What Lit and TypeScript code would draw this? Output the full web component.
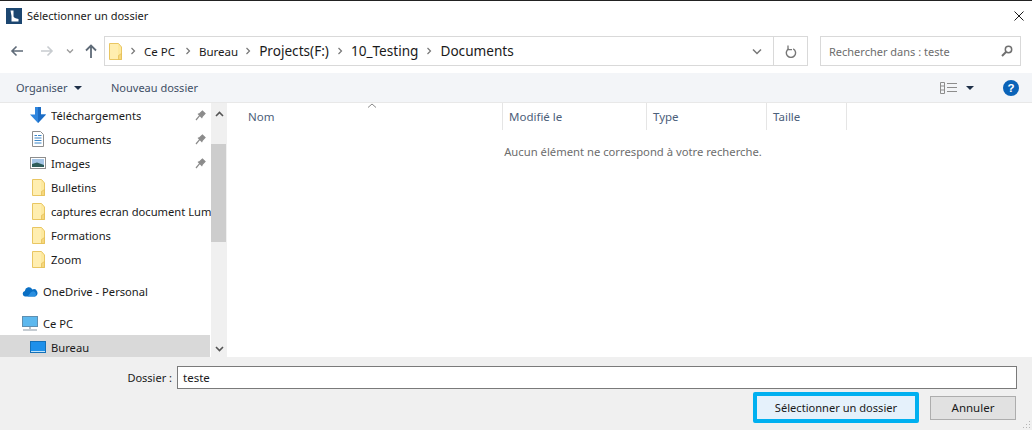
import { LitElement, html, css } from "lit";
import { customElement } from "lit/decorators.js";

const folder = html`<svg width="14" height="17" viewBox="-1 0 14 17"><path d="M.5 .5H9.5L12.5 4V16.5H.5Z" fill="#fde99f" stroke="#e9c662"/><path d="M1 1H9V16H1Z" fill="#ffeeb0"/><path d="M9.5 12.5 12.5 10.5V16.5H9.5Z" fill="#f6d77c" stroke="#e4bd55" stroke-width=".7"/></svg>`;
const pin = html`<svg width="12" height="12" viewBox="0 0 12 12" class="pin"><path d="M1 11 4.6 6.6M3 4.6 7.4 9M4.4 4.9 7.4 2 10 4.6 7.1 7.6Z" fill="#8b8b8b" stroke="#8b8b8b" stroke-width="1.2"/></svg>`;

@customElement("app-root")
export class AppRoot extends LitElement {
  static styles = css`
    :host { display: block; width: 1032px; height: 430px; overflow: hidden; background: #fff; font-family: "Noto Sans", "Open Sans", sans-serif; font-size: 11.5px; color: #1a1a1a; }
    svg { display: block; flex: none; }
    .dialog { height: 430px; display: flex; flex-direction: column; border-top: 1px solid #222; box-sizing: border-box; }
    .title { height: 29px; flex: none; display: flex; align-items: center; padding: 0 6px; gap: 5px; font-size: 11px; }
    .close { margin-left: auto; margin-right: 2px; }
    .nav { height: 43px; flex: none; display: flex; align-items: flex-start; padding: 6px 11px 0 10px; box-sizing: border-box; }
    .nav-buttons { width: 94px; height: 29px; display: flex; align-items: center; flex: none; }
    .nb-fwd { margin-left: 16px; }
    .nb-drop { margin-left: 12px; }
    .nb-up { margin-left: 11px; }
    .address { width: 704px; height: 30px; box-sizing: border-box; border: 1px solid #d9d9d9; display: flex; align-items: center; flex: none; }
    .crumbs { flex: 1; display: flex; align-items: center; padding-left: 3px; gap: 8px; }
    .crumbs .big { font-size: 13.6px; margin-bottom: 2px; }
    .chev-bureau { margin-left: 2px; }
    .chev-proj { margin-left: -1px; }
    .addr-right { width: 33px; height: 100%; border-left: 1px solid #d9d9d9; display: flex; align-items: center; justify-content: center; }
    .addr-drop { margin-right: 11px; }
    .search { margin-left: 12px; width: 201px; height: 30px; box-sizing: border-box; border: 1px solid #d9d9d9; display: flex; align-items: center; justify-content: space-between; padding: 0 7px 0 8px; color: #6d6d6d; font-size: 11px; flex: none; }
    .toolbar { height: 30px; flex: none; background: #f3f5f8; border-bottom: 1px solid #e8e8e8; box-sizing: border-box; display: flex; align-items: center; padding: 0 13px 0 16px; color: #3f4f66; font-size: 11px; }
    .org { display: flex; align-items: center; gap: 6px; width: 95px; }
    .right { margin-left: auto; display: flex; align-items: center; }
    .view-caret { margin-left: 9px; }
    .help { margin-left: 29px; }
    .main { height: 254px; flex: none; display: flex; }
    .side { width: 211px; flex: none; overflow: hidden; font-size: 11.2px; }
    .row { height: 24px; display: flex; align-items: center; white-space: nowrap; position: relative; box-sizing: border-box; flex: none; }
    .ic { width: 16px; display: flex; justify-content: center; flex: none; margin-right: 5px; }
    .l2 { padding-left: 30px; }
    .l1 { padding-left: 22px; }
    .gap { margin-top: 8px; }
    .row.sel { background: #d9d9d9; margin-right: 1px; }
    .pin { position: absolute; right: 4px; top: 6px; }
    .name { overflow: hidden; }
    .scroll { width: 16px; background: #f0f0f0; flex: none; display: flex; flex-direction: column; margin-right: 2px; }
    .arrow { height: 17px; display: flex; align-items: center; justify-content: center; flex: none; }
    .arrow.up { margin-top: 2px; }
    .thumb { width: 15px; height: 98px; background: #cdcdcd; margin-top: 22px; flex: none; }
    .arrow.down { margin-top: auto; }
    .content { flex: 1; display: flex; flex-direction: column; }
    .head { height: 27px; display: flex; color: #4c607a; flex: none; }
    .col { box-sizing: border-box; border-right: 1px solid #e5e5e5; padding: 6px 0 0 6px; flex: none; }
    .col.nom { width: 274px; padding-left: 19px; position: relative; }
    .col.mod { width: 144px; }
    .col.type { width: 120px; }
    .col.size { width: 80px; }
    .caret { position: absolute; left: 138px; top: 0; }
    .empty { text-align: center; color: #6d6d6d; font-size: 11.25px; margin-top: 14px; width: 808px; }
    .bottom { flex: 1; background: #f0f0f0; display: flex; flex-direction: column; position: relative; padding: 9px 15px 0 0; }
    .field { display: flex; align-items: center; justify-content: flex-end; gap: 5px; font-size: 11px; }
    .input { width: 840px; height: 23px; box-sizing: border-box; border: 1px solid #7a7a7a; background: #fff; padding-left: 5px; display: flex; align-items: center; font-size: 11.5px; }
    .actions { display: flex; justify-content: flex-end; align-items: center; margin-top: 3px; padding-right: 1px; }
    .btn { display: flex; align-items: center; justify-content: center; box-sizing: border-box; }
    .primary { width: 166px; height: 31px; border: 4px solid #00b0f0; border-radius: 2px; background: #e5f1fb; margin-right: 11px; font-size: 11.1px; }
    .cancel { width: 86px; height: 24px; border: 1px solid #adadad; background: #e1e1e1; }
    .grip { position: absolute; right: 1px; bottom: 1px; }
  `;

  private sideRow(name: string, icon: unknown, cls = "l2", pinned = false) {
    return html`<div class="row ${cls}"><span class="ic">${icon}</span><span class="name">${name}</span>${pinned ? pin : ""}</div>`;
  }

  render() {
    const dl = html`<svg width="16" height="16" viewBox="0 0 16 16"><path d="M5 0H11V7.5H16L8 16 0 7.5H5Z" fill="#2f86de"/><path d="M8 0H11V7.5H16L8 16Z" fill="#1c6cc4"/></svg>`;
    const doc = html`<svg width="12" height="16" viewBox="0 0 12 16"><path d="M.5 .5H8.5L11.5 3.5V15.5H.5Z" fill="#fff" stroke="#8d8d8d"/><path d="M2.5 4.5H5M6 4.5H9.5M2.5 7H9.5M2.5 9.5H9.5M2.5 12H9.5" stroke="#3d87c8"/></svg>`;
    const img = html`<svg width="16" height="12" viewBox="0 0 16 12"><rect x=".5" y=".5" width="15" height="11" fill="#fff" stroke="#8d8d8d"/><rect x="2" y="2" width="12" height="8" fill="#a5c5e6"/><path d="M2 7 7 5.5 14 8V10H2Z" fill="#2e5d5a"/></svg>`;
    const cloud = html`<svg width="16" height="11" viewBox="0 0 17 11" preserveAspectRatio="none"><path d="M3 10.5A2.8 2.8 0 0 1 3 5 4.3 4.3 0 0 1 11 3.4 3.6 3.6 0 0 1 14 10.5Z" fill="#0a6fc4"/><path d="M6 10.5 9 6.8A4 4 0 0 1 11 5.5 3 3 0 0 1 14 10.5Z" fill="#2a8fe0"/></svg>`;
    const pc = html`<svg width="16" height="15" viewBox="0 0 16 15"><rect x=".5" y=".5" width="15" height="10" fill="#5cb8ee" stroke="#5f8fb0"/><path d="M8 11V13M1 14H15" stroke="#8b9aa6" stroke-width="1.2"/></svg>`;
    const desk = html`<svg width="16" height="12" viewBox="0 0 16 12"><rect x=".5" y=".5" width="15" height="11" fill="#1e90ea" stroke="#1470b8"/><path d="M1 10.5H15" stroke="#bfe3fa"/></svg>`;
    const chev = (cls = "") => html`<svg class=${cls} width="6" height="8" viewBox="0 0 6 8"><path d="M1.5 1 4.5 4 1.5 7" fill="none" stroke="#777" stroke-width="1.2"/></svg>`;
    return html`<div class="dialog">
      <div class="title">
        <svg width="16" height="16" viewBox="0 0 16 16"><rect width="16" height="16" fill="#1c4670"/><path d="M4.5 2.5H7.5V8.5Q8 10 12.5 11V13.5H5.5Q6 8 4.5 2.5Z" fill="#fff"/></svg>
        <span>Sélectionner un dossier</span>
        <svg class="close" width="10" height="10" viewBox="0 0 10 10"><path d="M.5 .5 9.5 9.5M9.5 .5 .5 9.5" stroke="#1a1a1a" fill="none"/></svg>
      </div>
      <div class="nav">
        <div class="nav-buttons">
          <svg width="14" height="12" viewBox="0 0 14 12"><path d="M13 6H2M6.5 1.5 2 6 6.5 10.5" fill="none" stroke="#5f6b78" stroke-width="1.6"/></svg>
          <svg class="nb-fwd" width="14" height="12" viewBox="0 0 14 12"><path d="M1 6H12M7.5 1.5 12 6 7.5 10.5" fill="none" stroke="#c8ccd0" stroke-width="1.6"/></svg>
          <svg class="nb-drop" width="8" height="6" viewBox="0 0 8 6"><path d="M1 1.5 4 4.5 7 1.5" fill="none" stroke="#9a9a9a" stroke-width="1.3"/></svg>
          <svg class="nb-up" width="12" height="14" viewBox="0 0 12 14"><path d="M6 14V2M1 6.5 6 1.5 11 6.5" fill="none" stroke="#5f6b78" stroke-width="1.8"/></svg>
        </div>
        <div class="address">
          <div class="crumbs">
            ${folder}
            ${chev()}<span>Ce PC</span>${chev("chev-bureau")}<span>Bureau</span>${chev("chev-proj")}<span class="big">Projects(F:)</span>${chev()}<span class="big">10_Testing</span>${chev()}<span class="big">Documents</span>
          </div>
          <svg class="addr-drop" width="10" height="7" viewBox="0 0 10 7"><path d="M1 1.5 5 5.5 9 1.5" fill="none" stroke="#777" stroke-width="1.5"/></svg>
          <div class="addr-right"><svg width="12" height="13" viewBox="0 0 12 13"><path d="M3.5 2.8A4.6 4.6 0 1 0 8 2.8" fill="none" stroke="#777" stroke-width="1.4" transform="translate(.2 1)"/><path d="M3 .5V4.6H7" fill="none" stroke="#777" stroke-width="1.3"/></svg></div>
        </div>
        <div class="search"><span>Rechercher dans : teste</span>
          <svg width="12" height="12" viewBox="0 0 12 12"><circle cx="7.5" cy="4.5" r="3.2" fill="none" stroke="#6f6f6f" stroke-width="1.5"/><path d="M5 7 1 11" stroke="#6f6f6f" stroke-width="2"/></svg>
        </div>
      </div>
      <div class="toolbar">
        <div class="org"><span>Organiser</span><svg width="8" height="4" viewBox="0 0 8 4"><path d="M0 0H8L4 4Z" fill="#1e3048"/></svg></div>
        <span>Nouveau dossier</span>
        <div class="right">
          <svg width="17" height="12" viewBox="0 0 17 12"><path d="M.5 .5H4.5V11.5H.5ZM.5 4H4.5M.5 8H4.5M7 1.5H17M7 5.5H17M7 9.5H17" fill="none" stroke="#8d8d8d"/></svg>
          <svg class="view-caret" width="8" height="4" viewBox="0 0 8 4"><path d="M0 0H8L4 4Z" fill="#1e3048"/></svg>
          <svg class="help" width="16" height="16" viewBox="0 0 16 16"><circle cx="8" cy="8" r="8" fill="#0a63b8"/><text x="8" y="12" text-anchor="middle" font-family="Liberation Sans" font-weight="700" font-size="11.5" fill="#fff">?</text></svg>
        </div>
      </div>
      <div class="main">
        <div class="side">
          ${this.sideRow("Téléchargements", dl, "l2", true)}
          ${this.sideRow("Documents", doc, "l2", true)}
          ${this.sideRow("Images", img, "l2", true)}
          ${this.sideRow("Bulletins", folder)}
          ${this.sideRow("captures ecran document Lum", folder)}
          ${this.sideRow("Formations", folder)}
          ${this.sideRow("Zoom", folder)}
          ${this.sideRow("OneDrive - Personal", cloud, "l1 gap")}
          ${this.sideRow("Ce PC", pc, "l1 gap")}
          ${this.sideRow("Bureau", desk, "l2 sel")}
        </div>
        <div class="scroll">
          <div class="arrow up"><svg width="9" height="6" viewBox="0 0 9 6"><path d="M1 5 4.5 1.5 8 5" fill="none" stroke="#555" stroke-width="1.6"/></svg></div>
          <div class="thumb"></div>
          <div class="arrow down"><svg width="9" height="6" viewBox="0 0 9 6"><path d="M1 1 4.5 4.5 8 1" fill="none" stroke="#555" stroke-width="1.6"/></svg></div>
        </div>
        <div class="content">
          <div class="head">
            <div class="col nom">Nom<svg class="caret" width="10" height="5" viewBox="0 0 10 5"><path d="M1 4.5 5 1 9 4.5" fill="none" stroke="#8a8a8a"/></svg></div>
            <div class="col mod">Modifié le</div>
            <div class="col type">Type</div>
            <div class="col size">Taille</div>
          </div>
          <div class="empty">Aucun élément ne correspond à votre recherche.</div>
        </div>
      </div>
      <div class="bottom">
        <div class="field"><span>Dossier :</span><div class="input">teste</div></div>
        <div class="actions">
          <div class="btn primary">Sélectionner un dossier</div>
          <div class="btn cancel">Annuler</div>
        </div>
        <svg class="grip" width="9" height="9" viewBox="0 0 9 9"><path d="M7 1h1v1H7zM4 4h1v1H4zM7 4h1v1H7zM1 7h1v1H1zM4 7h1v1H4zM7 7h1v1H7z" fill="#b5b5b5"/></svg>
      </div>
    </div>`;
  }
}
